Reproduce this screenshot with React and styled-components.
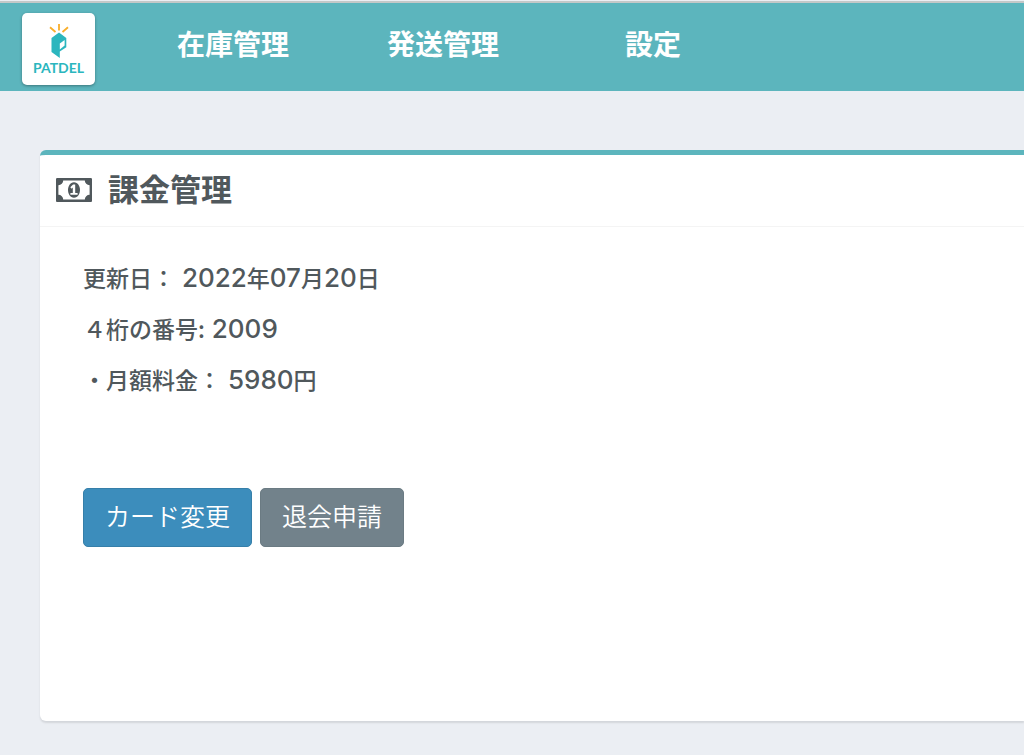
import styled, { createGlobalStyle } from "styled-components"

const GlobalStyle = createGlobalStyle`
    body {
        margin: 0;
        background: #EBEEF3;
        color: #50585C;
        font-family: "Noto Sans CJK JP", sans-serif;
    }
`

const PageHeader = styled.header`
    display: flex;
    align-items: center;
    height: 84px;
    margin-top: 1px;
    padding: 4px 0 0 22px;
    border-top: 2px solid #C4C8C8;
    background: #5CB5BD;
`

const LogoLink = styled.a`
    display: flex;
    flex-direction: column;
    align-items: center;
    width: 73px;
    height: 72px;
    padding-top: 10px;
    margin-right: 33px;
    box-sizing: border-box;
    border-radius: 5px;
    background: #FFFFFF;
    box-shadow: 0 1px 3px rgba(0, 0, 0, 0.35);
    text-decoration: none;
`

const LogoText = styled.span`
    font-family: Lato, sans-serif;
    font-size: 14px;
    font-weight: 700;
    line-height: 18px;
    color: #2BB6BE;
`

const Nav = styled.nav`
    display: flex;
    padding-bottom: 12px;
`

const NavLink = styled.a`
    width: 210px;
    font-size: 28px;
    font-weight: 700;
    line-height: 40px;
    text-align: center;
    color: #FFFFFF;
    text-decoration: none;
`

const Content = styled.main`
    padding: 59px 0 33px 40px;
`

const Box = styled.section`
    min-height: 571px;
    box-sizing: border-box;
    border-top: 5px solid #5CB5BD;
    border-radius: 6px 0 0 6px;
    background: #FFFFFF;
    box-shadow: 0 2px 2px rgba(0, 0, 0, 0.1);
`

const BoxHeader = styled.div`
    display: flex;
    align-items: center;
    gap: 16px;
    height: 69px;
    padding: 0 16px 2px;
    border-bottom: 1px solid #F4F4F4;
`

const BoxTitle = styled.h1`
    margin: 0;
    padding-bottom: 4px;
    font-size: 31px;
    font-weight: 700;
    line-height: 44px;
`

const BoxBody = styled.div`
    padding: 32px 43px;
`

const InfoText = styled.p`
    margin: 0 0 14px;
    font-size: 23px;
    font-weight: 500;
    line-height: 36px;
`

const Digits = styled.span`
    font-family: Inter, sans-serif;
    font-size: 26px;
`

const ButtonContainer = styled.div`
    display: flex;
    gap: 8px;
    margin-top: 90px;
`

const ActionButton = styled.button`
    padding: 8px 21px 12px;
    border: 1px solid ${(props) => (props.$primary ? "#367FA9" : "#6B7B83")};
    border-radius: 5px;
    background: ${(props) => (props.$primary ? "#3C8DBC" : "#72828B")};
    color: #FFFFFF;
    font-family: inherit;
    font-size: 25px;
    font-weight: 350;
    line-height: 37px;
    cursor: pointer;
`

function LogoMark() {
    return (
        <svg width="20" height="36" viewBox="0 0 20 36" aria-hidden="true">
            <path d="M1 4.300L6.500 9M10 1v6.500M19 4.300L13.500 9" stroke="#F9AE2B" strokeWidth="1.8" fill="none" />
            <path d="M10 9.500L17.300 15v9.200L10.800 28.500V35L2.500 29V15z" fill="#2BB6BE" />
            <path d="M10.800 20.500L15.600 17v5.500L10.800 26.500z" fill="#FFFFFF" />
        </svg>
    )
}

function MoneyIcon() {
    return (
        <svg width="36" height="24" viewBox="0 256 1920 1280" fill="currentColor" aria-hidden="true">
            <path d="M768 1152h384v-96h-128v-448h-114l-148 137 77 80q42-37 55-57h2v288h-128v96zm512-256q0 70-21 142t-59.5 134-101.5 101-138 39-138-39-101.5-101-59.5-134-21-142 21-142 59.5-134 101.5-101 138-39 138 39 101.5 101 59.5 134 21 142zm512 256v-512q-106 0-181-75t-75-181h-1152q0 106-75 181t-181 75v512q106 0 181 75t75 181h1152q0-106 75-181t181-75zm128-832v1152q0 26-19 45t-45 19h-1792q-26 0-45-19t-19-45v-1152q0-26 19-45t45-19h1792q26 0 45 19t19 45z" />
        </svg>
    )
}

export default function App() {
    return (
        <>
            <GlobalStyle />
            <PageHeader>
                <LogoLink href="#">
                    <LogoMark />
                    <LogoText>PATDEL</LogoText>
                </LogoLink>
                <Nav>
                    <NavLink href="#stock">在庫管理</NavLink>
                    <NavLink href="#shipping">発送管理</NavLink>
                    <NavLink href="#settings">設定</NavLink>
                </Nav>
            </PageHeader>
            <Content>
                <Box>
                    <BoxHeader>
                        <MoneyIcon />
                        <BoxTitle>課金管理</BoxTitle>
                    </BoxHeader>
                    <BoxBody>
                        <InfoText>
                            更新日：<Digits> 2022</Digits>年<Digits>07</Digits>月<Digits>20</Digits>日
                        </InfoText>
                        <InfoText>
                            ４桁の番号:<Digits> 2009</Digits>
                        </InfoText>
                        <InfoText>
                            ・月額料金：<Digits> 5980</Digits>円
                        </InfoText>
                        <ButtonContainer>
                            <ActionButton type="button" $primary>カード変更</ActionButton>
                            <ActionButton type="button">退会申請</ActionButton>
                        </ButtonContainer>
                    </BoxBody>
                </Box>
            </Content>
        </>
    )
}
